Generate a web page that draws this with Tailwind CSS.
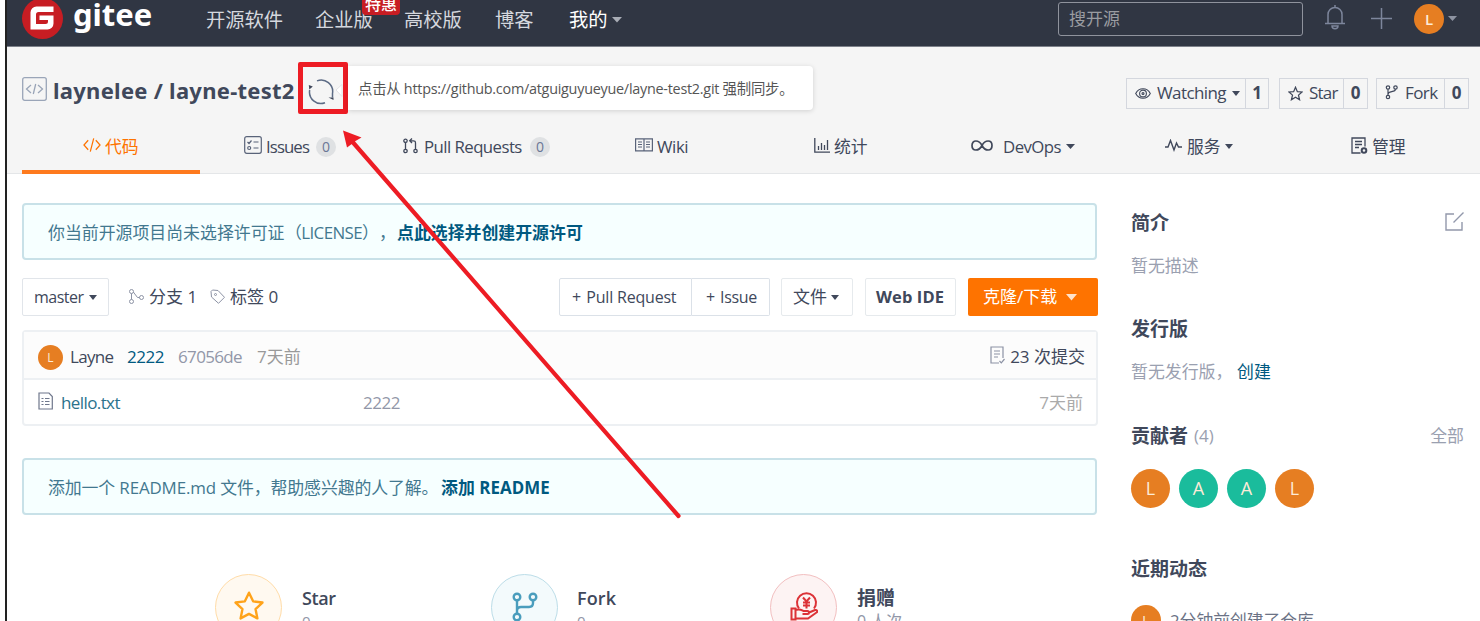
<!doctype html>
<html lang="zh-CN">
<head>
  <meta charset="UTF-8">
  <meta name="viewport" content="width=device-width, initial-scale=1.0">
  <title>laynelee/layne-test2</title>
  <script src="https://cdn.jsdelivr.net/npm/@tailwindcss/browser@4"></script>
</head>
<body class="relative w-[1480px] h-[621px] overflow-hidden bg-white pl-[5px] font-['Open_Sans','Noto_Sans_CJK_SC',sans-serif] text-[17px] leading-6 text-[#40485b] whitespace-nowrap">
  <div class="h-[621px] overflow-hidden border-l-2 border-[#222]">

    <header class="flex h-[47px] bg-[#303643] border-b border-[#7d818a] text-[19.3px] text-[#d5d8de]">
      <a class="flex w-[199px] pl-[15px]">
        <svg class="mt-[-2px] w-[41px] h-[41px] shrink-0" viewBox="0 0 41 41">
          <circle cx="20.5" cy="20.5" r="20.5" fill="#c71d23"/>
          <path d="M31.500 8.500H14.500a6 6 0 0 0-6 6V31.500h17a6 6 0 0 0 6-6V17.500H17.500v4.500h8.500v1.500a2.500 2.500 0 0 1-2.500 2.500h-9.500v-9.500a2.500 2.500 0 0 1 2.500-2.500h15z" fill="#fff"/>
        </svg>
        <span class="ml-[10px] mt-[-8px] font-['Noto_Sans'] font-bold text-[31px] leading-[44px] text-white">gitee</span>
      </a>
      <nav class="flex h-10 items-center">
        <a class="w-[109px]">开源软件</a>
        <a class="relative w-[89px]">企业版
          <span class="absolute left-[47px] top-[-13px] w-[38px] h-[20px] rounded-sm bg-[#c71d23] text-center text-[16px] leading-[18px] font-medium text-white">特惠</span>
        </a>
        <a class="w-[91px]">高校版</a>
        <a class="w-[74px]">博客</a>
        <a class="flex items-center gap-1 text-white">我的
          <svg class="w-[10px] h-[6px]" viewBox="0 0 10 6"><path d="M0 0h10L5 5.500z" fill="#a9adb6"/></svg>
        </a>
      </nav>
      <div class="ml-auto mt-[2px] flex h-[33px] w-[422px] items-center">
        <div class="flex h-[34px] w-[245px] items-center rounded-[3px] border border-[#8f939d] px-[10px] text-[17px] text-[#9a9ca1]">搜开源</div>
        <svg class="ml-[22px] mt-[-3px] w-[20px] h-[26px]" viewBox="0 0 20 26" fill="none" stroke="#7d869c" stroke-width="1.500">
          <path d="M0 19.500h20M3 19.500V10.500a7 7 0 0 1 14 0v9M10 3.500V1M7 22c0 3.500 6 3.500 6 0z"/>
        </svg>
        <svg class="ml-[26px] mt-[-1px] w-[21px] h-[21px]" viewBox="0 0 21 21" stroke="#7d869c" stroke-width="1.500"><path d="M10.500 0v21M0 10.500h21"/></svg>
        <span class="ml-[22px] size-[30px] rounded-full bg-[#e67e22] text-center text-[15px] leading-[30px] font-semibold text-[#fdebd8]">L</span>
        <svg class="ml-[4px] w-[9px] h-[5px]" viewBox="0 0 9 5"><path d="M0 0h9L4.500 5z" fill="#8d93a1"/></svg>
      </div>
    </header>

    <section class="h-[127px] border-b border-[#e4e6e8] bg-[#f5f5f5] pl-[15px]">
      <div class="flex h-[84px] items-center">
        <svg class="mt-[-1px] w-[25px] h-[24px] shrink-0" viewBox="0 0 25 24" fill="none" stroke="#9aa5b8" stroke-width="1.300">
          <rect x=".7" y=".7" width="23.600" height="22.600" rx="2"/>
          <path d="M9 8l-4.500 4L9 16M16 8l4.500 4-4.500 4M13.700 7l-2.400 10"/>
        </svg>
        <h1 class="ml-[6px] mt-[2px] w-[245px] font-['Noto_Sans'] text-[22px] font-bold tracking-[0.27px]">laynelee / layne-test2</h1>
        <span class="mt-[-2px] flex h-[52px] w-[50px] shrink-0 items-center justify-center border-[5px] border-[#ed1c24] rounded-[2px]">
          <svg class="mt-[7px] ml-[-4px] w-[26px] h-[26px]" viewBox="0 0 26 26" fill="none" stroke="#5c6b85" stroke-width="1.500">
            <path d="M9 1.900A11.500 11.500 0 0 1 24.500 14.500v4"/>
            <path d="M17 23.800A11.500 11.500 0 0 1 1.700 11"/>
            <path d="M20.500 18.500h5v2.500zM.8 6l4 1.500-3.500 3z" fill="#40485b" stroke="none"/>
          </svg>
        </span>
        <div class="mt-[-3px] flex h-[44px] w-[465px] items-center rounded-r-[4px] bg-white pl-[10px] pt-[2px] text-[14.4px] text-[#555] shadow-[0_1px_5px_rgba(0,0,0,0.15)]">
          <span class="tracking-[-0.26px]">点击从 https://github.com/atguiguyueyue/layne-test2.git 强制同步。</span>
        </div>
        <div class="ml-auto mr-[11px] mt-[8px] flex h-[31px] text-[17px] [&>div]:flex [&>div]:items-center [&>div]:border [&>div]:border-[#d4d7de] [&_b]:flex [&_b]:h-full [&_b]:items-center [&_b]:justify-center [&_b]:border-l [&_b]:border-[#d4d7de]">
          <div class="w-[143px] pl-[8px]">
            <svg class="w-[16px] h-[11px]" viewBox="0 0 16 11" fill="none" stroke="#40485b" stroke-width="1.100"><path d="M.7 5.500C4-.8 12-.8 15.300 5.500 12 11.800 4 11.800.7 5.500z"/><circle cx="8" cy="5.500" r="3.400"/><circle cx="8" cy="5.500" r="1"/></svg>
            <span class="ml-[6px] w-[71px] tracking-[-0.6px]">Watching</span>
            <svg class="ml-[4px] w-[8px] h-[5px]" viewBox="0 0 8 5"><path d="M0 0h8L4 5z" fill="#40485b"/></svg>
            <b class="ml-auto w-[23px]">1</b>
          </div>
          <div class="ml-[10px] w-[89px] pl-[8px]">
            <svg class="w-[15px] h-[15px]" viewBox="0 0 24 24" fill="none" stroke="#40485b" stroke-width="2"><path d="M12 2l3 7 7.500.6-5.700 5 1.700 7.400L12 18l-6.500 4 1.700-7.400-5.700-5L9 9z"/></svg>
            <span class="ml-[6px] tracking-[-0.8px]">Star</span>
            <b class="ml-auto w-[24px]">0</b>
          </div>
          <div class="ml-[8px] w-[93px] pl-[8px]">
            <svg class="mt-[-2px] w-[13px] h-[15px]" viewBox="0 0 13 15" fill="none" stroke="#40485b" stroke-width="1.200"><circle cx="3" cy="2.500" r="1.700"/><circle cx="10.500" cy="2.500" r="1.700"/><circle cx="3" cy="12" r="1.700"/><path d="M3 4.200v6M10.500 4.200c0 3.500-7.500 1.500-7.500 5"/></svg>
            <span class="ml-[7px] tracking-[-0.6px]">Fork</span>
            <b class="ml-auto w-[24px]">0</b>
          </div>
        </div>
      </div>
      <nav class="relative flex h-[43px] items-center pb-[12px] text-[16.8px] [&>a]:flex [&>a]:items-center [&>a]:shrink-0">
        <span class="absolute left-0 bottom-0 h-[4px] w-[178px] bg-[#fe7a1e]"></span>
        <a class="ml-[61px] w-[161px] text-[#fe7300]">
          <svg class="mt-[-3px] w-[18px] h-[16px]" viewBox="0 0 19 16" fill="none" stroke="#fe7300" stroke-width="1.300"><path d="M5.500 3L1 8l4.500 5M13.500 3L18 8l-4.500 5M11.300 1L7.700 15"/></svg>
          <span class="ml-[4px]">代码</span>
        </a>
        <a class="w-[159px]">
          <svg class="mt-[-3px] w-[18px] h-[18px]" viewBox="0 0 18 18" fill="none" stroke="#596379" stroke-width="1.200"><rect x=".7" y=".7" width="16.600" height="16.600" rx="2"/><path d="M3.500 6l1.500 1.500L7.500 4.500M9.500 6h5M9.500 12h5"/><circle cx="5.200" cy="12" r="1.500"/></svg>
          <span class="ml-[4px] w-[50px] tracking-[-0.9px]">Issues</span>
          <i class="not-italic size-[20px] rounded-full bg-[#dfe1e3] text-center text-[14px] leading-[20px] text-[#6b7796]">0</i>
        </a>
        <a class="w-[232px]">
          <svg class="mt-[-2px] w-[15px] h-[16px]" viewBox="0 0 15 16" fill="none" stroke="#40485b" stroke-width="1.300"><circle cx="2.500" cy="2.800" r="1.700"/><circle cx="2.500" cy="13" r="1.700"/><circle cx="12.500" cy="13" r="1.700"/><path d="M2.500 4.500v6.800M12.500 11.300V5c0-1.500-.8-2.200-2.200-2.200H7M9 .5L6.700 2.800 9 5"/></svg>
          <span class="ml-[6px] w-[106px] tracking-[-0.55px]">Pull Requests</span>
          <i class="not-italic size-[20px] rounded-full bg-[#dfe1e3] text-center text-[14px] leading-[20px] text-[#6b7796]">0</i>
        </a>
        <a class="w-[179px]">
          <svg class="mt-[-3px] w-[18px] h-[14px]" viewBox="0 0 18 14" fill="none" stroke="#596379" stroke-width="1.200"><path d="M.6.8h16.800v12H.6zM9 .8v12M3 4h4M3 6.500h4M3 9h4M11 4h4M11 6.500h4M11 9h4"/></svg>
          <span class="ml-[4px] tracking-[-0.4px]">Wiki</span>
        </a>
        <a class="w-[157px]">
          <svg class="mt-[-2px] w-[16px] h-[15px]" viewBox="0 0 16 15" fill="none" stroke="#40485b" stroke-width="1.300"><path d="M.8 0v14.200H16M4.500 12V8M7.500 12V5M10.500 12V7M13.500 12V2"/></svg>
          <span class="ml-[4px]">统计</span>
        </a>
        <a class="w-[194px]">
          <svg class="mt-[-3px] w-[22px] h-[11px]" viewBox="0 0 22 11" fill="none" stroke="#40485b" stroke-width="1.700"><path d="M11 5.500C8-.5 1-.5 1 5.500s7 6 10 0 10-6 10 0-7 6-10 0z"/></svg>
          <span class="ml-[10px] w-[63px] tracking-[-0.55px]">DevOps</span>
          <svg class="w-[9px] h-[5px]" viewBox="0 0 9 5"><path d="M0 0h9L4.500 5z" fill="#40485b"/></svg>
        </a>
        <a class="w-[186px]">
          <svg class="mt-[-2px] w-[17px] h-[13px]" viewBox="0 0 17 13" fill="none" stroke="#40485b" stroke-width="1.400"><path d="M0 8h3L5.500 1.500 9 11l2.500-7L13.500 8H17"/></svg>
          <span class="ml-[5px] w-[38px]">服务</span>
          <svg class="w-[8px] h-[5px]" viewBox="0 0 8 5"><path d="M0 0h8L4 5z" fill="#40485b"/></svg>
        </a>
        <a>
          <svg class="mt-[-3px] w-[17px] h-[17px]" viewBox="0 0 17 17" fill="none" stroke="#40485b" stroke-width="1.300"><path d="M9.500 16H1V1h13v8.500M4 4.500h7M4 7.500h7M4 10.500h4"/><circle cx="13" cy="13.500" r="2.300" stroke-width="2"/></svg>
          <span class="ml-[4px]">管理</span>
        </a>
      </nav>
    </section>

    <div class="flex pl-[15px]">
      <main class="w-[1076px] pt-[29px]">
        <div class="flex h-[57px] w-[1075px] items-center rounded-[4px] border-2 border-[#c8e1e8] bg-[#f6ffff] px-[24px] pt-[2px] text-[16.9px] text-[#42788f]">
          <span class="w-[237px]">你当前开源项目尚未选择许可证</span>
          <span class="w-[94px] tracking-[-0.6px]">（LICENSE）</span>
          <span class="w-[18px]">，</span>
          <b class="text-[#005980]">点此选择并创建开源许可</b>
        </div>

        <div class="mt-[18px] flex h-[38px] text-[17px] [&>div]:flex [&>div]:items-center [&>div]:shrink-0">
          <div class="w-[87px] rounded-[2px] border border-[#e1e5ea] pl-[11px] text-[16px]">
            <span class="w-[55px] tracking-[-0.5px]">master</span>
            <svg class="w-[8px] h-[5px]" viewBox="0 0 8 5"><path d="M0 0h8L4 5z" fill="#40485b"/></svg>
          </div>
          <div class="w-[101px] pl-[20px]">
            <svg class="mt-[-2px] w-[15px] h-[15px]" viewBox="0 0 15 15" fill="none" stroke="#8c92a4"><circle cx="2.500" cy="2.500" r="2"/><circle cx="2.500" cy="12.500" r="2"/><circle cx="12.500" cy="8.500" r="2"/><path d="M2.500 4.500v6M4.300 3l4.200 5.500h2"/></svg>
            <span class="ml-[5px]">分支 1</span>
          </div>
          <div class="w-[349px]">
            <svg class="mt-[-2px] w-[15px] h-[15px]" viewBox="0 0 15 15" fill="none" stroke="#8c92a4"><path d="M1 2.500L2.500 1l5.500.5 6.500 6.800-6 6L1.500 8z"/><circle cx="5.500" cy="5.500" r="1"/></svg>
            <span class="ml-[5px]">标签 0</span>
          </div>
          <div class="w-[133px] rounded-l-[2px] border border-[#dbe1e8] pl-[12px] text-[16px]"><span class="tracking-[-0.2px] word-spacing">+&hairsp; Pull Request</span></div>
          <div class="w-[78px] rounded-r-[2px] border border-l-0 border-[#dbe1e8] pl-[14px] text-[16px]"><span class="tracking-[-0.3px]">+&hairsp; Issue</span></div>
          <div class="ml-[11px] w-[72px] rounded-[2px] border border-[#e6eaed] pl-[11px]">文件
            <svg class="ml-[4px] w-[8px] h-[5px]" viewBox="0 0 8 5"><path d="M0 0h8L4 5z" fill="#40485b"/></svg>
          </div>
          <div class="ml-[12px] w-[91px] rounded-[2px] border border-[#e6eaed] pl-[10px] text-[16.5px] font-bold"><span class="tracking-[0.1px]">Web IDE</span></div>
          <div class="ml-[12px] w-[130px] rounded-[2px] bg-[#fe7300] pl-[15px] text-white">克隆/下载
            <svg class="ml-[9px] w-[11px] h-[7px]" viewBox="0 0 11 7"><path d="M0 0h11L5.500 6.500z" fill="#ffe3cc"/></svg>
          </div>
        </div>

        <div class="mt-[14px] h-[96px] rounded-[4px] border-2 border-[#edf0f3]">
          <div class="flex h-[48px] items-center border-b-2 border-[#edf0f3] bg-[#fcfcfc] pl-[14px] pt-[3px] pr-[11px]">
            <span class="mt-[2px] size-[25px] rounded-full bg-[#e67e22] text-center text-[12px] leading-[25px] text-[#fdebd8]">L</span>
            <span class="ml-[7px] w-[57px] tracking-[-0.7px]">Layne</span>
            <span class="w-[51px] tracking-[-0.5px] text-[#005980]">2222</span>
            <span class="w-[79px] tracking-[-0.65px] text-[#9297a8]">67056de</span>
            <span class="text-[#999]">7天前</span>
            <svg class="ml-auto mt-[-4px] w-[15px] h-[18px]" viewBox="0 0 15 18" fill="none" stroke="#8c92a4" stroke-width="1.200"><path d="M9 17H1V1h12v11M4 5h6M4 8h6M4 11h4M9.500 15l1.800 1.800L14.500 13"/></svg>
            <span class="ml-[5px]">23 次提交</span>
          </div>
          <div class="flex h-[45px] items-center pl-[14px] pr-[13px]">
            <svg class="mt-[-3px] w-[15px] h-[18px]" viewBox="0 0 15 18" fill="none" stroke="#6f778c" stroke-width="1.200"><path d="M1 1h10l3.300 3.500V17H1zM3.500 6.500h2M7 6.500h4.500M3.500 9.500h2M7 9.500h4.500M3.500 12.500h2M7 12.500h4.500"/></svg>
            <span class="ml-[8px] w-[302px] tracking-[-0.6px] text-[#2b728c]">hello.txt</span>
            <span class="tracking-[-0.5px] text-[#9297a8]">2222</span>
            <span class="ml-auto text-[#aaa]">7天前</span>
          </div>
        </div>

        <div class="mt-[32px] flex h-[57px] w-[1075px] items-center rounded-[4px] border-2 border-[#c8e1e8] bg-[#f6ffff] px-[24px] pt-[2px] text-[16.9px] text-[#42788f]">
          <span class="w-[393px] tracking-[-0.12px]">添加一个 README.md 文件，帮助感兴趣的人了解。</span>
          <b class="tracking-[0.05px] text-[#005980]">添加 README</b>
        </div>

        <div class="mt-[59px] flex pl-[193px]">
          <div class="flex w-[276px]">
            <span class="flex size-[67px] items-center justify-center rounded-full border border-[#ffdca8] bg-[#fff9f0]">
              <svg class="mt-[-3px] w-[32px] h-[32px]" viewBox="0 0 24 24" fill="none" stroke="#ffa31a" stroke-width="1.800" stroke-linejoin="round"><path d="M12 2l3.100 6.500 7 .9-5.200 4.900 1.400 7L12 17.900l-6.300 3.400 1.400-7L1.900 9.400l7-.9z"/></svg>
            </span>
            <div class="ml-[20px] mt-[12px]"><p class="text-[18px] font-semibold leading-6 tracking-[-0.4px]">Star</p><p class="text-[15px] leading-[22px] text-[#9297a8]">0</p></div>
          </div>
          <div class="flex w-[279px]">
            <span class="flex size-[67px] items-center justify-center rounded-full border border-[#bcdde8] bg-[#f3fafc]">
              <svg class="mt-[-2px] w-[26px] h-[30px]" viewBox="0 0 26 30" fill="none" stroke="#4a9dbd" stroke-width="2.400"><circle cx="5" cy="5" r="3.300"/><circle cx="21" cy="5" r="3.300"/><circle cx="5" cy="25" r="3.300"/><path d="M5 8.500v13M21 8.500v2.500q0 4-4 4H9q-4 0-4 4"/></svg>
            </span>
            <div class="ml-[19px] mt-[12px]"><p class="text-[18px] font-semibold leading-6 tracking-[0.1px]">Fork</p><p class="text-[15px] leading-[22px] text-[#9297a8]">0</p></div>
          </div>
          <div class="flex">
            <span class="flex size-[67px] items-center justify-center rounded-full border border-[#f2bfc0] bg-[#fdf3f3]">
              <svg class="mt-[-2px] w-[28px] h-[31px]" viewBox="0 0 28 31" fill="none" stroke="#dc3237" stroke-width="2"><path d="M9 17.500a9.500 9.500 0 1 1 15 0M13 6.500l3.500 4 3.500-4M16.500 10.500v7M13 11.500h7M13 14.500h7"/><path d="M1.500 17.500h4v11h-4zM5.500 19c4-1.500 6 0 8 1h4c2 0 2 3 0 3h-5M18 22l7-3c2-.5 3 1.500 1.500 2.500L18 27.500H5.500"/></svg>
            </span>
            <div class="ml-[20px] mt-[12px]"><p class="text-[19px] font-bold leading-6">捐赠</p><p class="text-[16px] leading-[22px] text-[#9297a8]">0 人次</p></div>
          </div>
        </div>
      </main>

      <aside class="ml-[33px] w-[333px] pt-[37px] text-[16.9px] text-[#9aa0b0]">
        <div class="flex h-[24px] items-center justify-between">
          <h2 class="text-[19px] font-bold text-[#40485b]">简介</h2>
          <svg class="mt-[-4px] w-[19px] h-[19px]" viewBox="0 0 19 19" fill="none" stroke="#9298ab" stroke-width="1.400"><path d="M9 2H1v16h16v-8M8.500 10.500L18.500.5"/></svg>
        </div>
        <p class="mt-[19px]">暂无描述</p>
        <h2 class="mt-[39px] text-[19px] font-bold text-[#40485b]">发行版</h2>
        <p class="mt-[19px] flex"><span class="w-[106px]">暂无发行版，</span><a class="text-[#005980]">创建</a></p>
        <div class="mt-[40px] flex h-[24px] items-center">
          <h2 class="text-[19px] font-bold text-[#40485b]">贡献者</h2>
          <span class="ml-[6px]">(4)</span>
          <span class="ml-auto">全部</span>
        </div>
        <div class="mt-[21px] flex gap-[9px] text-center text-[18px] leading-[39px] text-[#fdebd8] [&>span]:size-[39px] [&>span]:rounded-full">
          <span class="bg-[#e67e22]">L</span>
          <span class="bg-[#1abc9c]">A</span>
          <span class="bg-[#1abc9c]">A</span>
          <span class="bg-[#e67e22]">L</span>
        </div>
        <h2 class="mt-[49px] text-[19px] font-bold text-[#40485b]">近期动态</h2>
        <div class="mt-[24px] flex">
          <span class="size-[30px] rounded-full bg-[#e67e22] text-center text-[15px] leading-[30px] text-[#fdebd8]">L</span>
          <span class="ml-[9px] mt-[4px] text-[16.800px] text-[#6b7285]">2分钟前创建了仓库</span>
        </div>
      </aside>
    </div>
  </div>

  <svg class="absolute left-0 top-0 w-[1480px] h-[621px]" viewBox="0 0 1480 621">
    <path d="M342 84.500l-6 5.500 6 6.500z" fill="#fff" stroke="#e3e3e6"/>
    <path d="M350 139L678.500 516" stroke="#ed1c24" stroke-width="4.200" stroke-linecap="round"/>
    <path d="M343 130.500l18.500 7-6 3.500-3 2.500-5.500 4z" fill="#ed1c24"/>
  </svg>
</body>
</html>
